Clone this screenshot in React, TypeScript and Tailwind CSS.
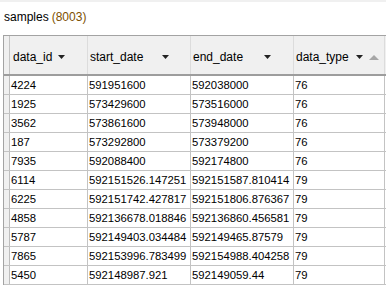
const columns = [
  { name: "data_id", width: "w-[78px]", label: "w-[45px]", pad: "pl-[3px]" },
  { name: "start_date", width: "w-[103px]", label: "w-[72px]", pad: "pl-[2px]" },
  { name: "end_date", width: "w-[103px]", label: "w-[71px]", pad: "pl-[2px]" },
  { name: "data_type", width: "w-[91px]", label: "w-[60px]", pad: "pl-[2px]", sorted: true },
];

const rows = [
  ["4224", "591951600", "592038000", "76"],
  ["1925", "573429600", "573516000", "76"],
  ["3562", "573861600", "573948000", "76"],
  ["187", "573292800", "573379200", "76"],
  ["7935", "592088400", "592174800", "76"],
  ["6114", "592151526.147251", "592151587.810414", "79"],
  ["6225", "592151742.427817", "592151806.876367", "79"],
  ["4858", "592136678.018846", "592136860.456581", "79"],
  ["5787", "592149403.034484", "592149465.87579", "79"],
  ["7865", "592153996.783499", "592154988.404258", "79"],
  ["5450", "592148987.921", "592149059.44", "79"],
];

function DownArrow() {
  return (
    <svg width="7" height="4" viewBox="0 0 7 4" className="shrink-0">
      <polygon points="0,0 7,0 3.5,4" fill="#222" />
    </svg>
  );
}

function SortUp() {
  return (
    <svg width="10" height="5" viewBox="0 0 10 5" className="ml-[6px] shrink-0">
      <polygon points="0,5 10,5 5,0" fill="#a6a6a6" />
    </svg>
  );
}

export default function App() {
  return (
    <div
      className="w-[386px] h-[285px] overflow-hidden bg-white text-black"
      style={{ fontFamily: '"Liberation Sans", Arial, sans-serif' }}
    >
      <div className="h-[2px] bg-[#f0f0f0]" />
      <div className="h-[33px] flex items-center pl-[4px] pb-[3px] text-[12px]">
        <span>samples</span>
        <span className="ml-[3px] text-[#7d4f00]">(8003)</span>
      </div>

      <div className="ml-[3px] border-l border-t border-[#a3a3a3]">
        {/* header */}
        <div className="flex h-[40px] bg-[#f0f0f0] border-b-2 border-[#9d9d9d] text-[12px]">
          <div className="w-[6px] border-r border-[#c4c4c4]" />
          {columns.map((c) => (
            <div
              key={c.name}
              className={`${c.width} ${c.pad} flex items-center pt-[4px] border-r border-[#dcdcdc]`}
            >
              <span className={`${c.label} shrink-0`}>{c.name}</span>
              <DownArrow />
              {c.sorted && <SortUp />}
            </div>
          ))}
        </div>

        {/* body */}
        {rows.map((r, i) => (
          <div key={i} className="flex h-[19px] border-b border-[#c3c3c3] text-[11.3px] leading-[18px]">
            <div className="w-[6px] bg-[#f0f0f0] border-r border-[#bdbdbd]" />
            {r.map((v, j) => (
              <div
                key={j}
                className={`${columns[j].width} pl-[1px] border-r border-[#c3c3c3] whitespace-nowrap overflow-hidden`}
              >
                {v}
              </div>
            ))}
          </div>
        ))}
      </div>
    </div>
  );
}
